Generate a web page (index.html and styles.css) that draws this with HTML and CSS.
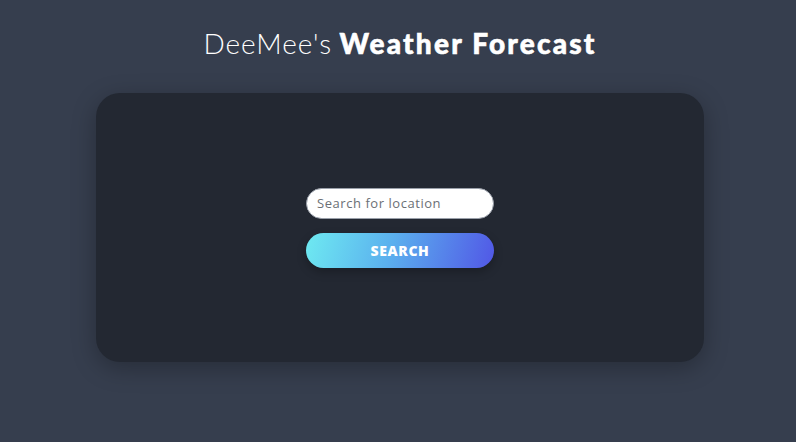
FILE: index.html
```html
<!DOCTYPE html>
<html>
<head>
<meta charset="utf-8">
<link rel="stylesheet" href="styles.css">
</head>
<body>
<div class="page">
  <h1 class="title"><span class="light">DeeMee's</span> <span class="bold">Weather Forecast</span></h1>
  <div class="card">
    <form class="search">
      <input class="input" type="text" placeholder="Search for location">
      <button class="btn" type="button">SEARCH</button>
    </form>
  </div>
</div>
</body>
</html>
```
FILE: styles.css
```css
html, body {
  margin: 0;
  padding: 0;
  height: 100%;
}
body {
  background: #363e4e;
  font-family: "Open Sans", "Liberation Sans", sans-serif;
  color: #fff;
}
.page {
  display: flex;
  flex-direction: column;
  align-items: center;
  padding-top: 24px;
  padding-left: 4px;
}
.title {
  margin: 0;
  font-size: 28px;
  line-height: 38px;
  font-weight: 400;
  letter-spacing: 0;
}
.title .light {
  font-weight: 300;
  font-family: "Lato", sans-serif;
  letter-spacing: 1px;
}
.title .bold {
  font-weight: 900;
  font-family: "Lato", sans-serif;
  letter-spacing: 2.2px;
  -webkit-text-stroke: 0.6px #fff;
}
.card {
  margin-top: 31px;
  width: 608px;
  height: 269px;
  background: #232832;
  border-radius: 24px;
  box-shadow: 0 6px 24px rgba(0,0,0,0.28);
  display: flex;
  align-items: center;
  justify-content: center;
}
.search {
  display: flex;
  flex-direction: column;
  gap: 14px;
}
.input {
  box-sizing: border-box;
  width: 188px;
  height: 31px;
  border-radius: 16px;
  border: 1px solid #9aa0aa;
  background: #fff;
  padding: 0 10px;
  font-family: "Open Sans", sans-serif;
  font-size: 13px;
  letter-spacing: 0.55px;
  color: #333;
  outline: none;
}
.input::placeholder {
  color: #6b6f75;
}
.btn {
  width: 188px;
  height: 35px;
  border: none;
  border-radius: 18px;
  background: linear-gradient(105deg, #6eeaf1 0%, #5bb0ee 45%, #5157e6 100%);
  color: #fff;
  font-family: "Open Sans", sans-serif;
  font-weight: 800;
  font-size: 14px;
  letter-spacing: 0.6px;
  box-shadow: 0 4px 10px rgba(0,0,0,0.25);
}
```
